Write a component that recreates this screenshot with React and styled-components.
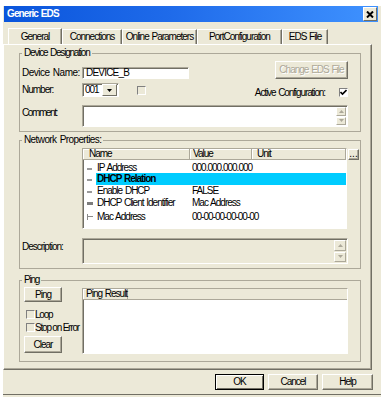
import React from 'react';
import styled, { createGlobalStyle } from 'styled-components';

const beige = '#ECE9D8';
const dark = '#716F64';
const shade = '#ACA899';

const GlobalStyle = createGlobalStyle`
  body {
    margin: 0;
    background: #fff;
    font-family: "Liberation Sans", Arial, sans-serif;
    font-size: 10px;
    letter-spacing: -1px;
    word-spacing: 1px;
    line-height: 12px;
    color: #000;
  }
`;

const Window = styled.div`
  width: 381px;
  height: 397px;
  box-sizing: border-box;
  padding-top: 6px;
  border-left: 3px solid #fff;
  background: #fff;
  display: flex;
  flex-direction: column;
  overflow: hidden;
`;

const Frame = styled.div`
  flex: 1;
  background: ${beige};
  display: flex;
  flex-direction: column;
`;

const TitleBar = styled.div`
  width: 373px;
  height: 16px;
  margin-left: 1px;
  margin-top: -6px;
  padding-top: 6px;
  background: linear-gradient(to right, #0A55DC 0%, #1F6BEA 45%, #3F92FF 100%) bottom / 100% 16px no-repeat, #fff;
  display: flex;
  align-items: center;
  justify-content: space-between;
  padding-right: 1px;
  box-sizing: content-box;
`;

const Title = styled.span`
  color: #fff;
  font-weight: bold;
  font-size: 10px;
  letter-spacing: -0.9px;
  padding-left: 3px;
`;

const CloseButton = styled.div`
  width: 12px;
  height: 12px;
  background: ${beige};
  border: 1px solid;
  border-color: #fff ${dark} ${dark} #fff;
  display: flex;
  align-items: center;
  justify-content: center;
`;

const TabStrip = styled.div`
  display: flex;
  align-items: flex-end;
  height: 16px;
  margin-top: 6px;
  padding-left: 5px;
`;

const Tab = styled.div`
  box-sizing: border-box;
  width: ${(p) => p.$w}px;
  height: ${(p) => (p.$active ? 16 : 15)}px;
  border-top: 1px solid #fff;
  border-left: 1px solid #fff;
  border-right: 1px solid ${dark};
  box-shadow: inset -1px 0 0 ${shade};
  display: flex;
  align-items: center;
  justify-content: center;
  white-space: nowrap;
`;

const Panel = styled.div`
  width: 369px;
  box-sizing: border-box;
  border: 1px solid;
  border-color: #fff ${dark} ${dark} #fff;
  box-shadow: inset -1px -1px 0 ${shade};
  padding: 0 10px 7px 15px;
`;

const Group = styled.fieldset`
  margin: ${(p) => p.$mt}px 0 0;
  padding: ${(p) => p.$pt}px 0 ${(p) => p.$pb}px 2px;
  border: 1px solid ${shade};
  min-width: 0;
`;

const Legend = styled.legend`
  padding: 0 2px;
  line-height: 12px;
  letter-spacing: ${(p) => p.$ls ?? -1.2}px;
`;

const Row = styled.div`
  display: flex;
  align-items: ${(p) => p.$align || 'flex-start'};
  margin-top: ${(p) => p.$mt || 0}px;
`;

const FieldLabel = styled.div`
  width: 60px;
  flex-shrink: 0;
  margin-top: ${(p) => p.$mt || 0}px;
  letter-spacing: ${(p) => p.$ls ?? -1}px;
  white-space: nowrap;
`;

const Spacer = styled.div`
  flex: 1;
`;

const sunken = `
  border: 1px solid;
  border-color: ${shade} #fff #fff ${shade};
  box-shadow: inset 1px 1px 0 ${dark};
  box-sizing: border-box;
`;

const TextInput = styled.div`
  ${sunken}
  width: 107px;
  height: 12px;
  background: #fff;
  padding-left: 3px;
  line-height: 10px;
  letter-spacing: -0.8px;
`;

const Select = styled.div`
  ${sunken}
  width: 37px;
  height: 14px;
  background: #fff;
  display: flex;
  align-items: center;
  justify-content: space-between;
  padding: 1px 1px 1px 2px;
`;

const DropButton = styled.div`
  width: 13px;
  height: 10px;
  background: ${beige};
  border: 1px solid;
  border-color: #fff ${dark} ${dark} #fff;
  display: flex;
  align-items: center;
  justify-content: center;
`;

const Button = styled.div`
  box-sizing: border-box;
  width: ${(p) => p.$w}px;
  height: ${(p) => p.$h || 16}px;
  background: ${beige};
  border: 1px solid;
  border-color: ${(p) => (p.$default ? '#000' : `#fff ${dark} ${dark} #fff`)};
  box-shadow: ${(p) => (p.$default ? `inset 1px 1px 0 #fff, inset -1px -1px 0 ${dark}` : `inset -1px -1px 0 ${shade}`)};
  display: flex;
  align-items: center;
  justify-content: center;
  white-space: nowrap;
  color: ${(p) => (p.$disabled ? shade : '#000')};
  text-shadow: ${(p) => (p.$disabled ? '1px 1px 0 #fff' : 'none')};
  margin-right: ${(p) => p.$mr || 0}px;
  margin-top: ${(p) => p.$mt || 0}px;
`;

const Check = styled.div`
  box-sizing: border-box;
  width: 9px;
  height: 9px;
  border: 1px solid;
  border-color: #808080 #fff #fff #808080;
  background: ${(p) => (p.$white ? '#fff' : 'transparent')};
  margin-left: ${(p) => p.$ml || 0}px;
  margin-right: ${(p) => p.$mr || 0}px;
  margin-top: ${(p) => p.$mt || 0}px;
  display: flex;
  align-items: center;
  justify-content: center;
  flex-shrink: 0;
`;

const CheckRow = styled.div`
  display: flex;
  align-items: center;
  height: 9px;
  margin-top: ${(p) => p.$mt}px;
  margin-left: 2px;
  white-space: nowrap;
  letter-spacing: -1.2px;
  word-spacing: 0;
`;

const InlineText = styled.div`
  white-space: nowrap;
  margin-top: ${(p) => p.$mt || 0}px;
  letter-spacing: -1.1px;
`;

const TextArea = styled.div`
  ${sunken}
  width: ${(p) => p.$w}px;
  height: ${(p) => p.$h}px;
  background: ${(p) => p.$bg || '#fff'};
  display: flex;
  justify-content: flex-end;
  padding: 1px;
`;

const ScrollColumn = styled.div`
  display: flex;
  flex-direction: column;
  gap: ${(p) => p.$gap}px;
`;

const ScrollButton = styled.div`
  box-sizing: border-box;
  width: ${(p) => p.$w}px;
  height: ${(p) => p.$h}px;
  background: ${beige};
  border: 1px solid;
  border-color: #fff ${shade} ${shade} #fff;
  display: flex;
  align-items: center;
  justify-content: center;
`;

const Table = styled.div`
  ${sunken}
  width: 265px;
  height: 81px;
  background: #fff;
  display: flex;
  flex-direction: column;
  letter-spacing: -1px;
`;

const HeaderRow = styled.div`
  display: flex;
  height: 11px;
  flex-shrink: 0;
  background: ${beige};
`;

const HeadCell = styled.div`
  box-sizing: border-box;
  width: ${(p) => p.$w}px;
  flex: ${(p) => (p.$grow ? 1 : 'none')};
  height: 11px;
  line-height: 10px;
  padding-left: ${(p) => p.$pl}px;
  border-right: 1px solid ${shade};
  border-bottom: 1px solid ${shade};
  box-shadow: inset 1px 1px 0 #fff;
  white-space: nowrap;
  background: ${beige};
`;

const Rows = styled.div`
  padding-top: 2px;
`;

const PropRow = styled.div`
  display: flex;
  height: ${(p) => p.$h}px;
  align-items: center;
`;

const IconCell = styled.div`
  width: 13px;
  flex-shrink: 0;
  display: flex;
  align-items: center;
`;

const RowBody = styled.div`
  flex: 1;
  height: 100%;
  display: flex;
  align-items: center;
  background: ${(p) => (p.$selected ? '#00CCFF' : 'transparent')};
  font-weight: ${(p) => (p.$selected ? 'bold' : 'normal')};
`;

const NameCell = styled.div`
  width: 94px;
  flex-shrink: 0;
  padding-left: 1px;
  box-sizing: border-box;
  white-space: nowrap;
`;

const ValueCell = styled.div`
  padding-left: 2px;
  white-space: nowrap;
`;

const DotsButton = styled(Button)`
  width: 11px;
  height: 11px;
  margin-left: 1px;
  margin-top: 1px;
  line-height: 6px;
  letter-spacing: 0;
  align-items: flex-end;
  padding-bottom: 2px;
`;

const LeftColumn = styled.div`
  width: 38px;
  margin-left: 2px;
  margin-right: 20px;
  display: flex;
  flex-direction: column;
`;

const ResultBox = styled.div`
  ${sunken}
  width: 266px;
  height: 66px;
  margin-top: 1px;
  background: #fff;
`;

const ResultHead = styled.div`
  display: flex;
  height: 11px;
  background: ${beige};
  border-bottom: 1px solid ${shade};
  box-sizing: border-box;
`;

const Footer = styled.div`
  display: flex;
  justify-content: flex-end;
  gap: 4px;
  margin-top: 4px;
  padding-right: 8px;
`;

const BottomEdge = styled.div`
  margin-top: 4px;
  border-top: 1px solid ${dark};
`;

const Arrow = ({ dir, color = shade }) => (
  <svg width="5" height="3" viewBox="0 0 5 3">
    <path d={dir === 'up' ? 'M2.5 0 L5 3 L0 3 Z' : 'M0 0 L5 0 L2.5 3 Z'} fill={color} />
  </svg>
);

const CloseGlyph = () => (
  <svg width="8" height="7" viewBox="0 0 8 7">
    <path d="M1 0.5 L7 6.5 M7 0.5 L1 6.5" stroke="#000" strokeWidth="2" />
  </svg>
);

const CheckMark = () => (
  <svg width="7" height="7" viewBox="0 0 7 7">
    <path d="M0.5 3 L2.5 5 L6.5 1" stroke="#000" strokeWidth="1.6" fill="none" />
  </svg>
);

const RowIcon = ({ kind }) => {
  if (kind === 'bar') {
    return (
      <svg width="13" height="8" viewBox="0 0 13 8">
        <rect x="4" y="3" width="6" height="3" fill="#7C7C7C" />
      </svg>
    );
  }
  if (kind === 'tee') {
    return (
      <svg width="13" height="8" viewBox="0 0 13 8">
        <path d="M4.5 1 V7 M4.5 3.5 H10" stroke="#8A8A8A" strokeWidth="1" />
      </svg>
    );
  }
  return (
    <svg width="13" height="8" viewBox="0 0 13 8">
      <rect x="4" y="4" width="5" height="2" fill="#9A9A9A" />
    </svg>
  );
};

const tabs = [
  { label: 'General', w: 54, active: true },
  { label: 'Connections', w: 60 },
  { label: 'Online Parameters', w: 75 },
  { label: 'PortConfiguration', w: 85 },
  { label: 'EDS File', w: 46 },
];

const properties = [
  { name: 'IP Address', value: '000.000.000.000', icon: 'dash', h: 11 },
  { name: 'DHCP Relation', value: '', icon: 'dash', h: 12, selected: true },
  { name: 'Enable DHCP', value: 'FALSE', icon: 'dash', h: 11 },
  { name: 'DHCP Client Identifier', value: 'Mac Address', icon: 'bar', h: 14 },
  { name: 'Mac Address', value: '00-00-00-00-00-00', icon: 'tee', h: 14 },
];

export default function App() {
  return (
    <Window>
      <GlobalStyle />
      <Frame>
        <TitleBar>
          <Title>Generic EDS</Title>
          <CloseButton>
            <CloseGlyph />
          </CloseButton>
        </TitleBar>

        <TabStrip>
          {tabs.map((t) => (
            <Tab key={t.label} $w={t.w} $active={t.active}>
              {t.label}
            </Tab>
          ))}
        </TabStrip>

        <Panel>
          <Group $mt={2} $pt={2} $pb={4}>
            <Legend>Device Designation</Legend>
            <Row $align="flex-end">
              <FieldLabel $ls={-0.5}>Device Name:</FieldLabel>
              <TextInput>DEVICE_B</TextInput>
              <Spacer />
              <Button $w={73} $h={18} $mr={12} $disabled>
                Change EDS File
              </Button>
            </Row>
            <Row $mt={4}>
              <FieldLabel $mt={1}>Number:</FieldLabel>
              <Select>
                <span>001</span>
                <DropButton>
                  <Arrow dir="down" color="#000" />
                </DropButton>
              </Select>
              <Check $ml={18} $mt={3} />
              <Spacer />
              <InlineText $mt={4}>Active Configuration:</InlineText>
              <Check $ml={14} $mt={5} $mr={12} $white>
                <CheckMark />
              </Check>
            </Row>
            <Row $mt={6}>
              <FieldLabel $mt={2} $ls={-1.4}>Comment:</FieldLabel>
              <TextArea $w={266} $h={22}>
                <ScrollColumn $gap={1}>
                  <ScrollButton $w={10} $h={9}>
                    <Arrow dir="up" />
                  </ScrollButton>
                  <ScrollButton $w={10} $h={9}>
                    <Arrow dir="down" />
                  </ScrollButton>
                </ScrollColumn>
              </TextArea>
            </Row>
          </Group>

          <Group $mt={2} $pt={2} $pb={4}>
            <Legend $ls={-0.6}>Network Properties:</Legend>
            <Row>
              <FieldLabel />
              <Table>
                <HeaderRow>
                  <HeadCell $w={107} $pl={6}>Name</HeadCell>
                  <HeadCell $w={62} $pl={3}>Value</HeadCell>
                  <HeadCell $grow $pl={5}>Unit</HeadCell>
                </HeaderRow>
                <Rows>
                  {properties.map((p) => (
                    <PropRow key={p.name} $h={p.h}>
                      <IconCell>
                        <RowIcon kind={p.icon} />
                      </IconCell>
                      <RowBody $selected={p.selected}>
                        <NameCell>{p.name}</NameCell>
                        <ValueCell>{p.value}</ValueCell>
                      </RowBody>
                    </PropRow>
                  ))}
                </Rows>
              </Table>
              <DotsButton $w={11}>...</DotsButton>
            </Row>
            <Row $mt={9}>
              <FieldLabel $mt={3}>Description:</FieldLabel>
              <TextArea $w={266} $h={26} $bg={beige}>
                <ScrollColumn $gap={1}>
                  <ScrollButton $w={12} $h={11}>
                    <Arrow dir="up" />
                  </ScrollButton>
                  <ScrollButton $w={12} $h={11}>
                    <Arrow dir="down" />
                  </ScrollButton>
                </ScrollColumn>
              </TextArea>
            </Row>
          </Group>

          <Group $mt={5} $pt={1} $pb={7}>
            <Legend>Ping</Legend>
            <Row>
              <LeftColumn>
                <Button $w={38} $h={15}>Ping</Button>
                <CheckRow $mt={8}>
                  <Check />
                  <span>Loop</span>
                </CheckRow>
                <CheckRow $mt={4}>
                  <Check />
                  <span>Stop on Error</span>
                </CheckRow>
                <Button $w={38} $h={17} $mt={4}>Clear</Button>
              </LeftColumn>
              <ResultBox>
                <ResultHead>
                  <HeadCell $w={45} $pl={3}>Ping Result</HeadCell>
                </ResultHead>
              </ResultBox>
            </Row>
          </Group>
        </Panel>

        <Footer>
          <Button $w={49} $default>OK</Button>
          <Button $w={50}>Cancel</Button>
          <Button $w={51}>Help</Button>
        </Footer>
        <BottomEdge />
      </Frame>
    </Window>
  );
}
